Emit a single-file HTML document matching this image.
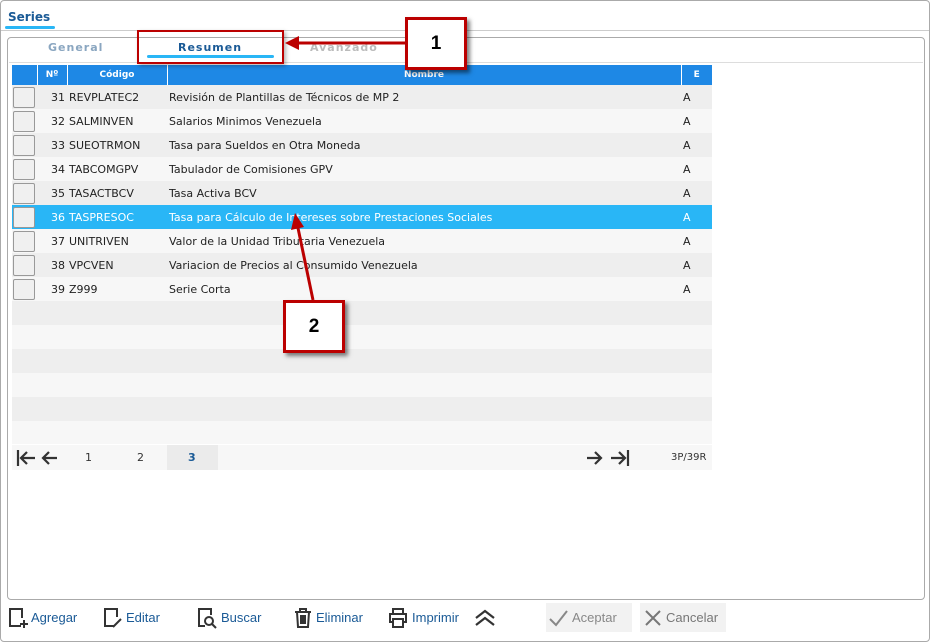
<!DOCTYPE html>
<html><head><meta charset="utf-8"><style>
*{box-sizing:border-box;margin:0;padding:0}
body{width:930px;height:642px;background:#fff;position:relative;font-family:"DejaVu Sans","Liberation Sans",sans-serif;overflow:hidden}
.abs{position:absolute}
.outer{left:0;top:0;width:930px;height:642px;border:1px solid #aaa;border-radius:4px}
.series{left:8px;top:10px;font-size:12px;font-weight:bold;color:#1a5a96}
.seriesline{left:5px;top:26px;width:50px;height:3px;background:#29b6f6;border-radius:2px}
.topline{left:1px;top:30px;width:928px;height:1px;background:#ccc}
.panel{left:7px;top:37px;width:918px;height:563px;border:1px solid #aaa;border-radius:4px}
.tab{top:41px;font-size:11px;font-weight:bold;letter-spacing:1px}
table{position:absolute;left:12px;top:65px;width:700px;border-collapse:collapse;font-size:11px;table-layout:fixed}
td{height:24px;padding:0 2px;white-space:nowrap;color:#222;overflow:hidden}
th{height:20px;background:#1e88e5;color:#fff;font-size:9px;font-weight:bold;border-left:1px solid #fff}
tr.o td{background:#eee}tr.e td{background:#f7f7f7}
tr.s td{background:#29b6f6;color:#fff}
.cb{width:22px;height:21px;border:1px solid #999;border-radius:2px;background:#f0f0f0;margin-left:0}
td.c0{padding:0 0 0 1px}
.n{text-align:right}
.pager{left:12px;top:445px;width:700px;height:25px;background:#f7f7f7;font-size:11px}
.btn{top:610px;font-family:"Liberation Sans",sans-serif;font-size:13px;color:#1a5a96}
.red{border:2px solid #b00;}
.nb{background:#fff;border:3px solid #b00;box-shadow:3px 3px 4px rgba(0,0,0,.5);font:bold 19px "Liberation Sans",sans-serif;text-align:center;color:#000}
</style></head><body>
<div class="abs outer"></div>
<div class="abs series">Series</div>
<div class="abs seriesline"></div>
<div class="abs topline"></div>
<div class="abs panel"></div>
<div class="abs tab" style="left:48px;color:#8aa6c0">General</div>
<div class="abs tab" style="left:178px;color:#1a5a96">Resumen</div>
<div class="abs" style="left:147px;top:55px;width:127px;height:3px;background:#29b6f6;border-radius:2px"></div>
<div class="abs tab" style="left:310px;color:#bbb">Avanzado</div>
<div class="abs" style="left:9px;top:62px;width:914px;height:1px;background:#ddd"></div>
<table>
<colgroup><col style="width:25px"><col style="width:30px"><col style="width:100px"><col><col style="width:31px"></colgroup>
<tr><th style="border-left:none"></th><th>Nº</th><th>Código</th><th>Nombre</th><th>E</th></tr>
<tr class="o"><td class="c0"><div class="cb"></div></td><td class="n">31</td><td>REVPLATEC2</td><td>Revisión de Plantillas de Técnicos de MP 2</td><td>A</td></tr>
<tr class="e"><td class="c0"><div class="cb"></div></td><td class="n">32</td><td>SALMINVEN</td><td>Salarios Minimos Venezuela</td><td>A</td></tr>
<tr class="o"><td class="c0"><div class="cb"></div></td><td class="n">33</td><td>SUEOTRMON</td><td>Tasa para Sueldos en Otra Moneda</td><td>A</td></tr>
<tr class="e"><td class="c0"><div class="cb"></div></td><td class="n">34</td><td>TABCOMGPV</td><td>Tabulador de Comisiones GPV</td><td>A</td></tr>
<tr class="o"><td class="c0"><div class="cb"></div></td><td class="n">35</td><td>TASACTBCV</td><td>Tasa Activa BCV</td><td>A</td></tr>
<tr class="s"><td class="c0"><div class="cb"></div></td><td class="n">36</td><td>TASPRESOC</td><td>Tasa para Cálculo de Intereses sobre Prestaciones Sociales</td><td>A</td></tr>
<tr class="e"><td class="c0"><div class="cb"></div></td><td class="n">37</td><td>UNITRIVEN</td><td>Valor de la Unidad Tributaria Venezuela</td><td>A</td></tr>
<tr class="o"><td class="c0"><div class="cb"></div></td><td class="n">38</td><td>VPCVEN</td><td>Variacion de Precios al Consumido Venezuela</td><td>A</td></tr>
<tr class="e"><td class="c0"><div class="cb"></div></td><td class="n">39</td><td>Z999</td><td>Serie Corta</td><td>A</td></tr>
<tr class="o"><td colspan="5"></td></tr>
<tr class="e"><td colspan="5"></td></tr>
<tr class="o"><td colspan="5"></td></tr>
<tr class="e"><td colspan="5"></td></tr>
<tr class="o"><td colspan="5"></td></tr>
<tr class="e"><td colspan="5" style="height:23px"></td></tr>
</table>
<div class="abs pager">
<svg class="abs" style="left:4px;top:4px" width="46" height="18" fill="none" stroke="#333" stroke-width="2.2"><path d="M2 1v16M19 9H5M11 3L5 9l6 6M41 9H27M33 3l-6 6 6 6"/></svg>
<span class="abs" style="left:73px;top:6px;color:#333">1</span>
<span class="abs" style="left:125px;top:6px;color:#333">2</span>
<div class="abs" style="left:155px;top:0;width:51px;height:25px;background:#ebebeb"></div>
<span class="abs" style="left:176px;top:6px;color:#1a5a96;font-weight:bold">3</span>
<svg class="abs" style="left:573px;top:4px" width="46" height="18" fill="none" stroke="#333" stroke-width="2.2"><path d="M2 9h14M10 3l6 6-6 6M26 9h14M34 3l6 6-6 6M43 1v16"/></svg>
<span class="abs" style="left:659px;top:7px;font-size:10px;color:#333">3P/39R</span>
</div>
<svg class="abs" style="left:8px;top:607px" width="20" height="22" fill="none" stroke="#333" stroke-width="2"><path d="M13 19H2V2h12v9M16 13v8M12 17h8"/></svg>
<div class="abs btn" style="left:31px">Agregar</div>
<svg class="abs" style="left:103px;top:607px" width="20" height="22" fill="none" stroke="#333" stroke-width="2"><path d="M11 19H2V2h12v8M10 20l8-8"/></svg>
<div class="abs btn" style="left:126px">Editar</div>
<svg class="abs" style="left:197px;top:607px" width="22" height="22" fill="none" stroke="#333" stroke-width="2"><path d="M8 19H2V2h12v6"/><circle cx="12" cy="14" r="4"/><path d="M15 17l4 4"/></svg>
<div class="abs btn" style="left:221px">Buscar</div>
<svg class="abs" style="left:293px;top:607px" width="20" height="22" fill="none" stroke="#333" stroke-width="2"><path d="M2 5h16M7 5V2h6v3M4 5l1 15h10l1-15M8 8v9M10 8v9M12 8v9"/></svg>
<div class="abs btn" style="left:316px">Eliminar</div>
<svg class="abs" style="left:388px;top:607px" width="20" height="22" fill="none" stroke="#333" stroke-width="2"><path d="M5 7V2h10v5M5 15H2V7h16v8h-3M5 12h10v8H5z"/></svg>
<div class="abs btn" style="left:412px">Imprimir</div>
<svg class="abs" style="left:474px;top:609px" width="22" height="18" fill="none" stroke="#333" stroke-width="2.2"><path d="M2 9l9-7 9 7M2 16l9-7 9 7"/></svg>
<div class="abs" style="left:546px;top:603px;width:86px;height:29px;background:#f2f2f2"></div>
<svg class="abs" style="left:549px;top:609px" width="20" height="18" fill="none" stroke="#888" stroke-width="2"><path d="M1 10l6 6L18 2"/></svg>
<div class="abs btn" style="left:572px;color:#888">Aceptar</div>
<div class="abs" style="left:640px;top:603px;width:86px;height:29px;background:#f2f2f2"></div>
<svg class="abs" style="left:644px;top:609px" width="18" height="18" fill="none" stroke="#777" stroke-width="2"><path d="M2 2l14 14M16 2L2 16"/></svg>
<div class="abs btn" style="left:666px;color:#777">Cancelar</div>
<div class="abs red" style="left:137px;top:30px;width:147px;height:34px;box-shadow:2px 2px 4px rgba(0,0,0,.3)"></div>
<svg class="abs" style="left:0;top:0" width="930" height="642"><path d="M405 43H296" stroke="#b00" stroke-width="3"/><path d="M285 43l14-7v14z" fill="#b00"/><path d="M313 300L298 228" stroke="#b00" stroke-width="3"/><path d="M295 213l-4 17 13-3z" fill="#b00"/></svg>
<div class="abs nb" style="left:405px;top:17px;width:62px;height:53px;line-height:47px">1</div>
<div class="abs nb" style="left:283px;top:300px;width:62px;height:53px;line-height:47px">2</div>
</body></html>
